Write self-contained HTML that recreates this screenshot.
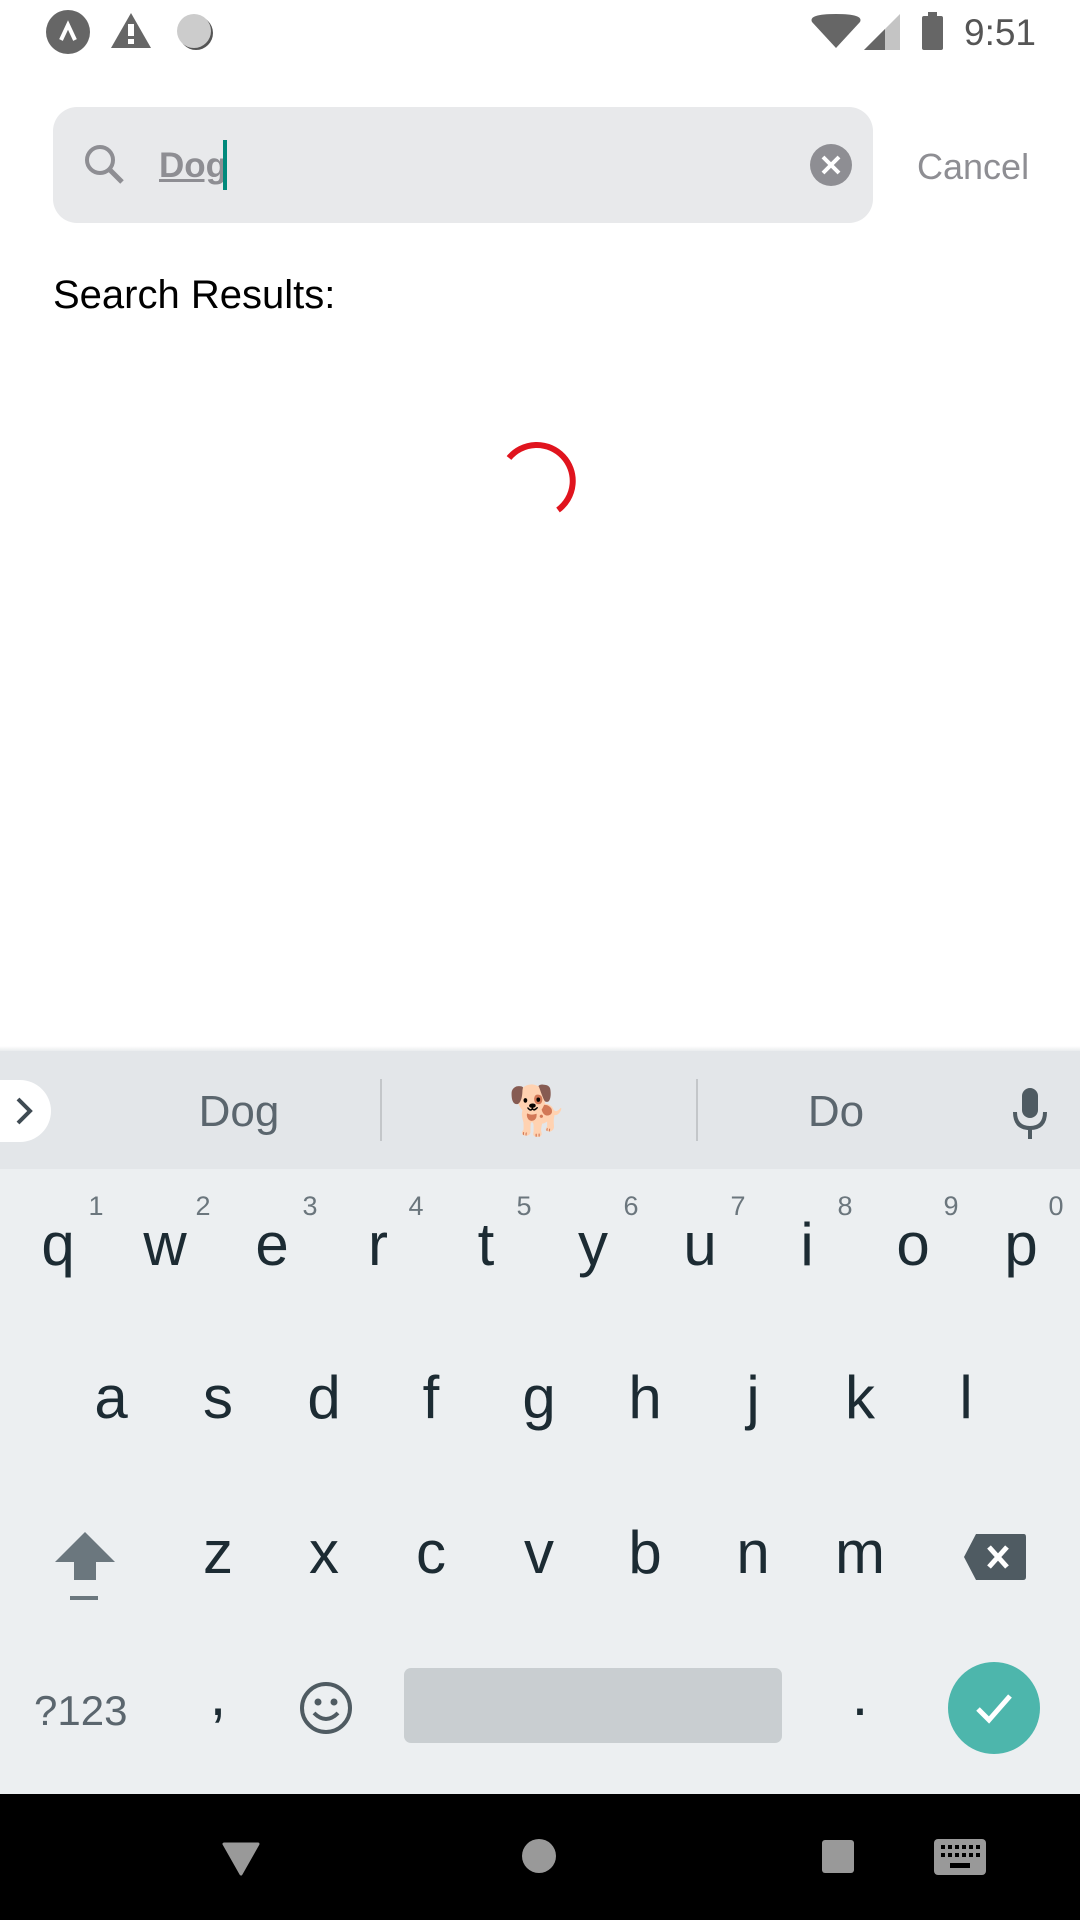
<!DOCTYPE html>
<html><head><meta charset="utf-8"><style>
*{margin:0;padding:0;box-sizing:border-box}
body{width:1080px;height:1920px;background:#fff;position:relative;overflow:hidden;font-family:"Liberation Sans","Noto Sans CJK SC",sans-serif}
.a{position:absolute}
.k{position:absolute;width:90px;text-align:center;font-size:60px;color:#1c2b33;line-height:1}
.n{position:absolute;width:40px;text-align:center;font-size:27px;color:#6b767d;line-height:1}
.s{position:absolute;width:200px;text-align:center;font-size:44px;color:#5b666e;line-height:1}
</style></head><body>
<!-- status bar -->
<svg class="a" style="left:0;top:0" width="1080" height="70">
<circle cx="68" cy="32" r="22" fill="#666"/>
<path d="M61 40 L68 25 L75 40" stroke="#fff" stroke-width="4" fill="none"/>
<path d="M131 13 L151 48 L111 48 Z" fill="#666"/>
<rect x="128" y="24" width="6" height="12" fill="#fff"/><rect x="128" y="39" width="6" height="5" fill="#fff"/>
<circle cx="196" cy="33" r="17" fill="#555"/>
<circle cx="194" cy="31" r="17" fill="#ccc"/>
<path d="M836 14 Q808 14 812 22 L836 48 L860 22 Q864 14 836 14Z" fill="#666"/>
<path d="M900 14 L900 50 L864 50 Z" fill="#c4c4c4"/>
<path d="M885 29 L885 50 L864 50 Z" fill="#666"/>
<rect x="922" y="16" width="21" height="34" rx="2" fill="#666"/><rect x="928" y="12" width="9" height="5" fill="#666"/>
</svg>
<div class="a" style="left:964px;top:12px;font-size:37px;color:#555">9:51</div>
<!-- search -->
<div class="a" style="left:53px;top:107px;width:820px;height:116px;border-radius:24px;background:#e8e9eb"></div>
<svg class="a" style="left:80px;top:140px" width="50" height="50"><circle cx="20" cy="20" r="13" stroke="#8e8e93" stroke-width="4" fill="none"/><path d="M29 29 L42 42" stroke="#8e8e93" stroke-width="5"/></svg>
<div class="a" style="left:159px;top:146px;font-size:35px;color:#8e8e93;font-weight:bold;text-decoration:underline">Dog</div>
<div class="a" style="left:223px;top:140px;width:4px;height:50px;background:#00897b"></div>
<svg class="a" style="left:810px;top:144px" width="42" height="42"><circle cx="21" cy="21" r="21" fill="#8e8e93"/><path d="M13 13 L29 29 M29 13 L13 29" stroke="#fff" stroke-width="4"/></svg>
<div class="a" style="left:917px;top:146px;font-size:36px;color:#8e8e93">Cancel</div>
<div class="a" style="left:53px;top:273px;font-size:40px;color:#000">Search Results:</div>
<svg class="a" style="left:495px;top:435px" width="90" height="90"><path d="M14 23 A36 36 0 1 1 63 75" stroke="#e0141e" stroke-width="6" fill="none"/></svg>
<!-- keyboard -->
<div class="a" style="left:0;top:1046px;width:1080px;height:6px;background:linear-gradient(#fff,#e6e8ea)"></div>
<div class="a" style="left:0;top:1051px;width:1080px;height:118px;background:#e3e6e9"></div>
<div class="a" style="left:0;top:1169px;width:1080px;height:625px;background:#eceff1"></div>
<div class="a" style="left:-30px;top:1080px;width:81px;height:62px;border-radius:31px;background:#fff"></div>
<svg class="a" style="left:10px;top:1093px" width="30" height="36"><path d="M8 6 L20 18 L8 30" stroke="#3f4b53" stroke-width="4" fill="none"/></svg>
<div class="s" style="left:139px;top:1090px">Dog</div>
<div class="a" style="left:380px;top:1079px;width:2px;height:62px;background:#c3c6c9"></div>
<div class="a" style="left:696px;top:1079px;width:2px;height:62px;background:#c3c6c9"></div>
<div class="a" style="left:508px;top:1088px;font-size:48px;line-height:1">🐕</div>
<div class="s" style="left:736px;top:1090px">Do</div>
<svg class="a" style="left:1010px;top:1086px" width="40" height="56"><rect x="12" y="2" width="16" height="30" rx="8" fill="#4f5b62"/><path d="M5 26 Q5 42 20 42 Q35 42 35 26" stroke="#4f5b62" stroke-width="4" fill="none"/><path d="M20 42 L20 53" stroke="#4f5b62" stroke-width="4"/></svg>
<!-- row1 -->
<div class="k" style="left:13px;top:1215px">q</div><div class="n" style="left:76px;top:1193px">1</div>
<div class="k" style="left:120px;top:1215px">w</div><div class="n" style="left:183px;top:1193px">2</div>
<div class="k" style="left:227px;top:1215px">e</div><div class="n" style="left:290px;top:1193px">3</div>
<div class="k" style="left:333px;top:1215px">r</div><div class="n" style="left:396px;top:1193px">4</div>
<div class="k" style="left:441px;top:1215px">t</div><div class="n" style="left:504px;top:1193px">5</div>
<div class="k" style="left:548px;top:1215px">y</div><div class="n" style="left:611px;top:1193px">6</div>
<div class="k" style="left:655px;top:1215px">u</div><div class="n" style="left:718px;top:1193px">7</div>
<div class="k" style="left:762px;top:1215px">i</div><div class="n" style="left:825px;top:1193px">8</div>
<div class="k" style="left:868px;top:1215px">o</div><div class="n" style="left:931px;top:1193px">9</div>
<div class="k" style="left:976px;top:1215px">p</div><div class="n" style="left:1036px;top:1193px">0</div>
<!-- row2 -->
<div class="k" style="left:66px;top:1368px">a</div>
<div class="k" style="left:173px;top:1368px">s</div>
<div class="k" style="left:279px;top:1368px">d</div>
<div class="k" style="left:386px;top:1368px">f</div>
<div class="k" style="left:494px;top:1368px">g</div>
<div class="k" style="left:600px;top:1368px">h</div>
<div class="k" style="left:708px;top:1368px">j</div>
<div class="k" style="left:815px;top:1368px">k</div>
<div class="k" style="left:921px;top:1368px">l</div>
<!-- row3 -->
<svg class="a" style="left:52px;top:1528px" width="66" height="76"><path d="M33 4 L63 34 L44 34 L44 52 L22 52 L22 34 L3 34 Z" fill="#6b777e"/><rect x="18" y="68" width="28" height="4" fill="#6b777e"/></svg>
<div class="k" style="left:173px;top:1523px">z</div>
<div class="k" style="left:279px;top:1523px">x</div>
<div class="k" style="left:386px;top:1523px">c</div>
<div class="k" style="left:494px;top:1523px">v</div>
<div class="k" style="left:600px;top:1523px">b</div>
<div class="k" style="left:708px;top:1523px">n</div>
<div class="k" style="left:815px;top:1523px">m</div>
<svg class="a" style="left:962px;top:1532px" width="66" height="50"><path d="M14 2 L62 2 Q64 2 64 5 L64 45 Q64 48 61 48 L14 48 L2 25 Z" fill="#4f5b62"/><path d="M27 15 L45 35 M45 15 L27 35" stroke="#fff" stroke-width="5"/></svg>
<!-- row4 -->
<div class="a" style="left:34px;top:1687px;font-size:42px;color:#5b666e">?123</div>
<div class="k" style="left:173px;top:1665px">,</div>
<svg class="a" style="left:298px;top:1680px" width="56" height="56"><circle cx="28" cy="28" r="24" stroke="#4f5b62" stroke-width="4" fill="none"/><circle cx="20" cy="22" r="3.5" fill="#4f5b62"/><circle cx="36" cy="22" r="3.5" fill="#4f5b62"/><path d="M16 33 Q28 45 40 33" stroke="#4f5b62" stroke-width="4" fill="none"/></svg>
<div class="a" style="left:404px;top:1668px;width:378px;height:75px;border-radius:7px;background:#c9ced1"></div>
<div class="k" style="left:815px;top:1665px">.</div>
<div class="a" style="left:948px;top:1662px;width:92px;height:92px;border-radius:50%;background:#4db6ac"></div>
<svg class="a" style="left:968px;top:1682px" width="52" height="52"><path d="M10 27 L21 38 L42 14" stroke="#fff" stroke-width="5" fill="none"/></svg>
<!-- nav -->
<div class="a" style="left:0;top:1794px;width:1080px;height:126px;background:#000"></div>
<svg class="a" style="left:0;top:1794px" width="1080" height="126">
<path d="M224 50 L258 50 L241 80 Z" fill="#999" stroke="#999" stroke-width="3" stroke-linejoin="round"/>
<circle cx="539" cy="62" r="17" fill="#999"/>
<rect x="822" y="46" width="32" height="33" rx="3" fill="#999"/>
<rect x="934" y="45" width="52" height="36" rx="4" fill="#999"/>
<g fill="#000"><rect x="941" y="51" width="4" height="4"/><rect x="948" y="51" width="4" height="4"/><rect x="955" y="51" width="4" height="4"/><rect x="962" y="51" width="4" height="4"/><rect x="969" y="51" width="4" height="4"/><rect x="976" y="51" width="4" height="4"/><rect x="941" y="59" width="4" height="4"/><rect x="948" y="59" width="4" height="4"/><rect x="955" y="59" width="4" height="4"/><rect x="962" y="59" width="4" height="4"/><rect x="969" y="59" width="4" height="4"/><rect x="976" y="59" width="4" height="4"/><rect x="950" y="69" width="20" height="5"/></g>
</svg>
</body></html>
